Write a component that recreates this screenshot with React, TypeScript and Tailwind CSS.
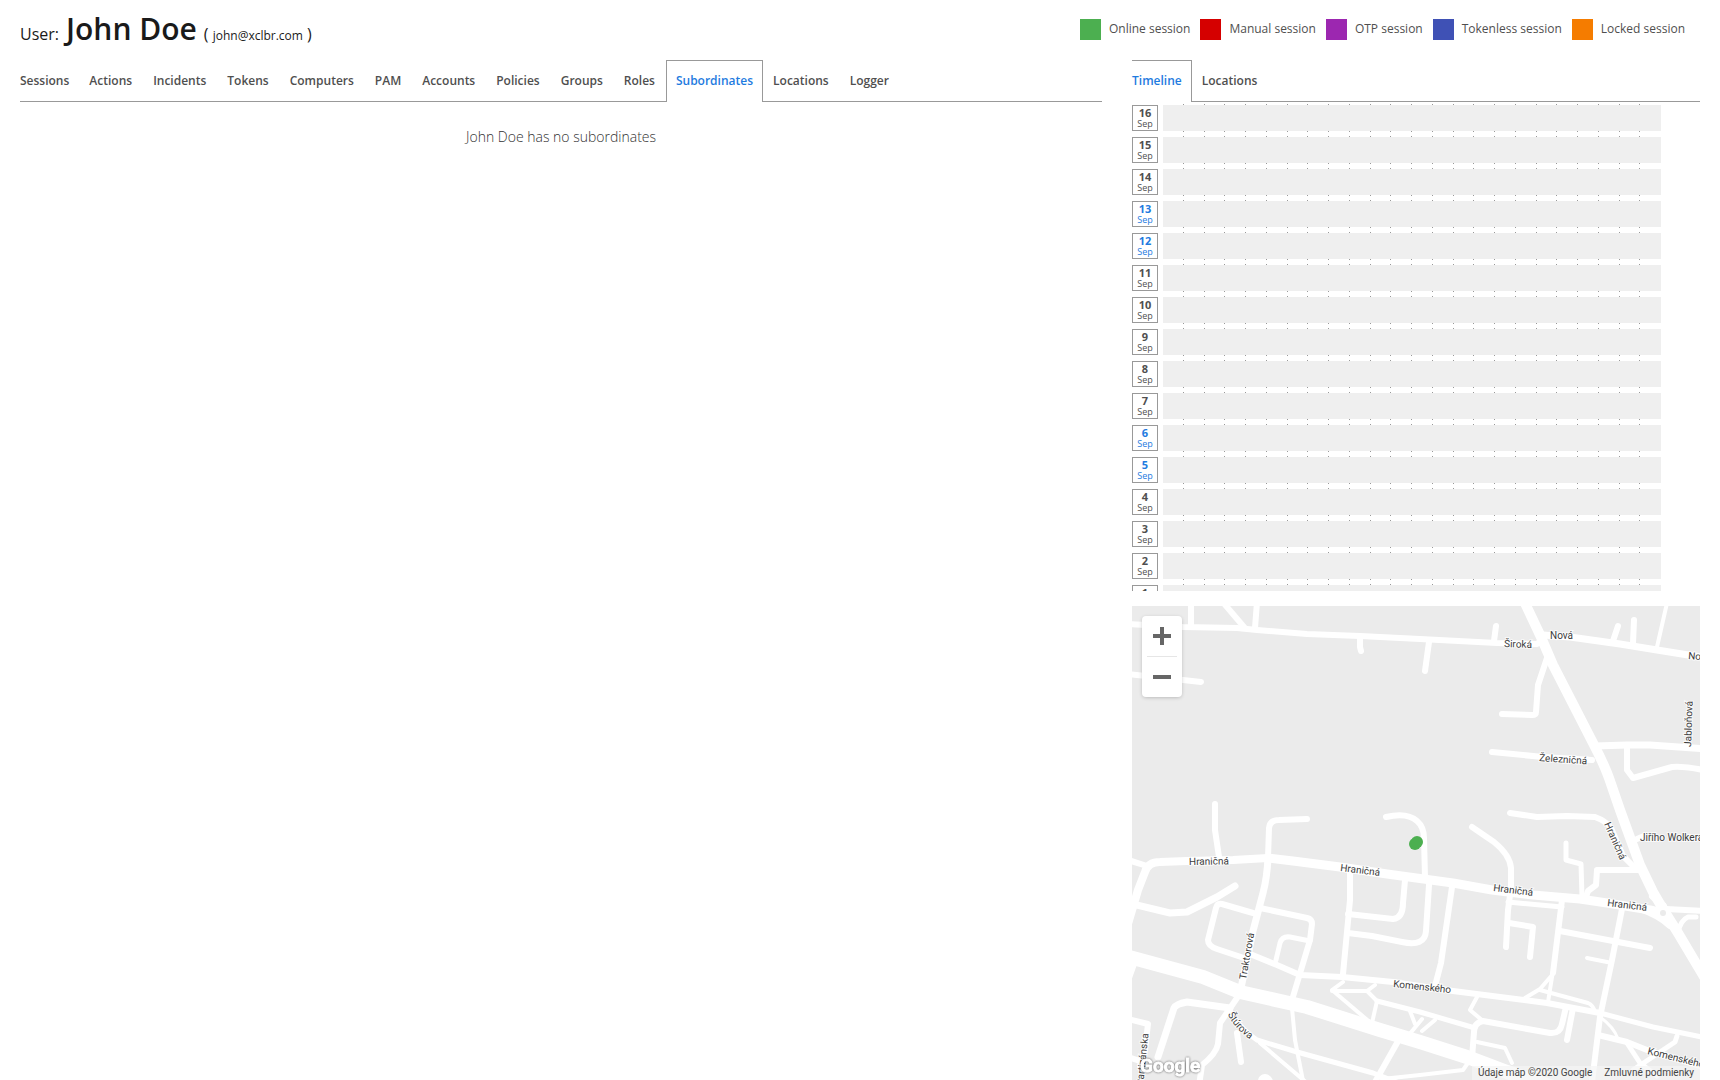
import { useState } from 'react';
import clsx from 'clsx';

const legend = [
  { label: 'Online session', color: 'bg-[#4caf50]' },
  { label: 'Manual session', color: 'bg-[#d50000]' },
  { label: 'OTP session', color: 'bg-[#9c27b0]' },
  { label: 'Tokenless session', color: 'bg-[#3f51b5]' },
  { label: 'Locked session', color: 'bg-[#f57c00]' },
];

const userTabs = [
  'Sessions', 'Actions', 'Incidents', 'Tokens', 'Computers', 'PAM', 'Accounts',
  'Policies', 'Groups', 'Roles', 'Subordinates', 'Locations', 'Logger',
];

const activityTabs = ['Timeline', 'Locations'];

const days = [16, 15, 14, 13, 12, 11, 10, 9, 8, 7, 6, 5, 4, 3, 2, 1];
const weekend = [13, 12, 6, 5];
const hours = Array.from({ length: 24 }, (_, i) => i);

// [stroke width, path]
const roads: [number, string][] = [
  // northern streets
  [6, 'M-4 18L51 21L105 22L125 24L175 28L228 30L288 33L365 37L405 38L412 32'],
  [6, 'M59 -4V20'],
  [6, 'M89 -6L112 21'],
  [6, 'M125 -4L123 22'],
  [6, 'M228 31V41L229 45'],
  [6, 'M-4 68L51 74L69 76'],
  [6, 'M364 20L362 35'],
  [6, 'M297 36L293 65'],
  [7, 'M411 29L438 31L488 38L525 44L575 52'],
  [6, 'M486 20L481 35'],
  [6, 'M502 14L501 37'],
  [4, 'M535 -3L525 41'],
  [6, 'M415 52L406 79L404 106Q404 109 400 109L370 108'],
  [6, 'M360 146L411 151L460 154'],
  [7, 'M463 140L495 139L518 139L575 143'],
  [6, 'M495 141V164L501 172L540 161Q555 160 575 165'],
  [10, 'M392 -5L409 31L421 59L461 137Q472 158 477 172L488 204L508 259L521 286L531 303L546 327L574 374'],
  // Hranicna
  [8, 'M-4 318L6 284L13 266Q16 256 28 256L55 255L101 254L136 252'],
  [9, 'M136 252L161 255L208 261L255 268L321 277L360 284L401 289L448 293L475 297L518 304L531 307'],
  [6, 'M-4 254L15 260'],
  [6, 'M83 198V224L87 251'],
  [6, 'M136 252L137 222Q138 214 147 214L175 213'],
  [7, 'M136 252Q135 272 131 287L121 325L109 382'],
  [6, 'M254 211Q275 206 285 215Q292 221 292 232L293 272'],
  [6, 'M378 207L405 211L435 210L463 211Q474 215 479 222L491 250L504 263'],
  [6, 'M340 221L362 236Q378 249 379 262L379 282L376 304L374 341'],
  [5, 'M434 237V254L449 258L450 291'],
  [6, 'M508 264H465L464 279L456 285L453 294'],
  [6, 'M505 233L512 230'],
  // western blocks
  [7, 'M-4 297L38 307L55 306L85 291L103 280'],
  [6, 'M121 307L90 298Q85 297 84 302L76 334Q76 340 85 343L115 353'],
  [6, 'M128 302L175 312Q180 313 180 318L178 334L163 384L160 394'],
  [4, 'M160 402L163 434L172 480'],
  [6, 'M118 348L145 359L168 369L210 371L261 376L321 385L415 397L468 407'],
  [5, 'M468 407L521 421L575 432'],
  [5, 'M144 354L148 337Q150 330 158 331L178 335'],
  [6, 'M218 267V294L211 368'],
  [6, 'M216 308L261 313Q271 312 271 297L273 274'],
  [6, 'M216 327L240 330L270 336Q293 341 294 325L297 279'],
  [14, 'M-6 350L71 371L108 386L175 401L248 424L288 436L338 452L375 466L421 481'],
  [6, 'M-3 372L2 358'],
  [6, 'M105 392L88 417L86 438Q84 448 70 459L67 480'],
  [7, 'M26 451L42 402Q44 398 55 396L98 402'],
  [5, 'M97 403Q108 423 125 434L165 446L241 467L275 480'],
  [6, 'M105 427L109 456'],
  [4, 'M128 437L175 477'],
  [6, 'M-4 413L16 418L13 444L8 460'],
  [6, 'M-4 451L8 455'],
  [14, 'M133 475L134 476'],
  // eastern blocks
  [5, 'M376 296L430 301'],
  [6, 'M377 317L401 321L398 351'],
  [6, 'M430 294L421 367'],
  [4, 'M421 365L416 396M421 368L408 383L393 392M408 384L456 397Q461 399 463 406'],
  [6, 'M428 325L518 342'],
  [6, 'M490 303L480 354L468 411L460 476'],
  [4, 'M455 352L480 357'],
  [6, 'M320 281L309 357L303 380'],
  [6, 'M441 402L435 434'],
  [3, 'M468 411Q482 421 486 433'],
  [6, 'M466 429L495 436L515 444L575 462'],
  [5, 'M495 437L508 457L525 470M501 464L543 436L545 430'],
  // southern paths
  [4, 'M211 376L200 384L240 418M200 385H235L243 379M235 385L245 395L240 417'],
  [5, 'M245 395L288 406L343 422'],
  [4, 'M278 405L283 418M290 413L276 430M303 414L290 425'],
  [6, 'M265 437L243 476'],
  [4, 'M250 473L288 469L331 464L340 451'],
  [6, 'M434 401L430 418Q428 428 418 427L351 415Q342 417 342 426L340 452'],
  [4, 'M351 415L338 404L345 391'],
  [4, 'M345 436L373 442L380 457'],
  // junction by the ring
  [8, 'M508 302Q528 309 538 319M521 290L531 300'],
  [6, 'M534 303L575 305'],
  [5, 'M546 326Q549 314 556 311L564 311'],
];

// [x, y, rotation, name]
const streets: [number, number, number, string][] = [
  [372, 41, 2, 'Široká'],
  [418, 33, 0, 'Nová'],
  [556, 53, 5, 'Nová'],
  [559, 141, -88, 'Jabloňová'],
  [407, 155, 4, 'Železničná'],
  [57, 259, -1, 'Hraničná'],
  [208, 265, 7, 'Hraničná'],
  [361, 285, 7, 'Hraničná'],
  [475, 300, 7, 'Hraničná'],
  [472, 218, 66, 'Hraničná'],
  [508, 235, 0, 'Jiřího Wolkera'],
  [114, 374, -80, 'Traktorová'],
  [261, 381, 6, 'Komenského'],
  [515, 448, 14, 'Komenského'],
  [11, 480, -84, 'Partizánska'],
];

interface TabsProps {
  tabs: string[];
  initial: string;
}

function Tabs({ tabs, initial }: TabsProps) {
  const [active, setActive] = useState(initial);

  return (
    <div role="tablist" className="flex h-[42px] text-xs font-semibold">
      {tabs.map((tab) => (
        <button
          key={tab}
          role="tab"
          aria-selected={tab === active}
          onClick={() => setActive(tab)}
          className={clsx(
            'cursor-pointer border-[#999] first:border-l-0 first:pl-0',
            tab === active
              ? 'border-x border-t px-[9px] pb-px text-[#1e7be0]'
              : 'border-b px-[10px] pt-px text-[#4f4f4f] not-first:pr-[11px]'
          )}
        >
          {tab}
        </button>
      ))}
      <div className="flex-1 border-b border-[#999]" />
    </div>
  );
}

// Dots that mark the hours between two day bars
function HourTicks({ first }: { first?: boolean }) {
  return (
    <div className={clsx('ml-[31px] flex', first ? 'h-[3px]' : 'h-[6px]')}>
      {hours.map((hour) => (
        <div key={hour} className="flex flex-1 justify-end">
          {hour < 23 && (
            <span className={clsx('w-px border-[#999]', first ? 'border-b' : 'border-y')} />
          )}
        </div>
      ))}
    </div>
  );
}

function Timeline() {
  return (
    <div className="h-[489px] overflow-y-auto pr-[39px] [scrollbar-width:none]">
      <HourTicks first />
      {days.map((day) => (
        <div key={day}>
          <div className="flex h-[26px] gap-[5px]">
            <div
              className={clsx(
                'flex w-[26px] flex-col items-center justify-center border border-[#999]',
                weekend.includes(day) ? 'text-[#1e7be0]' : 'text-[#4f4f4f]'
              )}
            >
              <span className="text-[11px] font-bold leading-[12px]">{day}</span>
              <span className="text-[9px] leading-[10px]">Sep</span>
            </div>
            <div className="flex-1 bg-[#efefef]" />
          </div>
          <HourTicks />
        </div>
      ))}
    </div>
  );
}

function SessionMap() {
  return (
    <div className="relative min-h-[300px] flex-1 overflow-hidden bg-[#ebebeb] font-['Roboto',sans-serif]">
      <svg
        className="absolute inset-0 h-full w-full"
        viewBox="0 0 568 474"
        preserveAspectRatio="xMinYMin slice"
      >
        <g fill="none" stroke="#fff" strokeLinecap="round" strokeLinejoin="round">
          {roads.map(([width, d]) => (
            <path key={d} d={d} strokeWidth={width} />
          ))}
        </g>
        <circle cx="531" cy="307" r="8" fill="#fff" />
        <circle cx="531" cy="307" r="3" fill="#ebebeb" />

        <g fill="#3c3c3c" stroke="#fff" strokeWidth="2" strokeOpacity="0.7" paintOrder="stroke" fontSize="10">
          {streets.map(([x, y, angle, name]) => (
            <text key={`${x}-${y}`} transform={`translate(${x} ${y}) rotate(${angle})`}>
              {name}
            </text>
          ))}
          <path id="sturova" d="M96 408Q102 423 122 436" fill="none" stroke="none" />
          <text>
            <textPath href="#sturova">Štúrova</textPath>
          </text>
        </g>

        <g fill="#4caf50">
          <circle cx="283" cy="238" r="6" />
          <circle cx="285" cy="236" r="6" />
        </g>

        <text
          x="8"
          y="466"
          fontSize="19"
          fontWeight="500"
          fill="#fff"
          stroke="#fff"
          strokeWidth="1"
          className="[filter:drop-shadow(0_0_1px_rgba(0,0,0,0.6))]"
        >
          Google
        </text>
      </svg>

      <div className="absolute left-[10px] top-[10px] flex w-10 flex-col items-center rounded-sm bg-white shadow-[0_1px_4px_-1px_rgba(0,0,0,0.3)]">
        <button aria-label="Zoom in" className="flex h-10 w-10 cursor-pointer items-center justify-center">
          <svg width="18" height="18" viewBox="0 0 18 18" fill="#666">
            <path d="M7 0h4v7h7v4h-7v7H7v-7H0V7h7z" />
          </svg>
        </button>
        <div className="h-px w-[30px] bg-[#e6e6e6]" />
        <button aria-label="Zoom out" className="flex h-10 w-10 cursor-pointer items-center justify-center">
          <svg width="18" height="18" viewBox="0 0 18 18" fill="#666">
            <path d="M0 7h18v4H0z" />
          </svg>
        </button>
      </div>

      <div className="absolute bottom-0 right-0 flex h-[14px] bg-[#f5f5f5]/70 text-[10px] leading-[13px] text-[#444]">
        <span className="px-[6px]">Údaje máp ©2020 Google</span>
        <a href="#terms" className="px-[6px]">Zmluvné podmienky</a>
      </div>
    </div>
  );
}

export default function App() {
  return (
    <div className="flex min-h-screen flex-col bg-white px-5 font-['Open_Sans',sans-serif] text-[#1a1a1a]">
      <header className="flex h-[60px] items-start justify-between pr-[15px]">
        <h1 className="flex items-baseline gap-[7px] pt-2 text-base leading-[42px]">
          <span>User:</span>
          <span className="text-[30px] font-semibold">John Doe</span>
          <span>
            ( <span className="text-xs">john@xclbr.com</span> )
          </span>
        </h1>
        <ul className="flex gap-[10px] pt-[19px] text-xs leading-[19px] text-[#4f4f4f]">
          {legend.map((item) => (
            <li key={item.label} className="flex gap-2">
              <span className={clsx('h-[21px] w-[21px]', item.color)} />
              {item.label}
            </li>
          ))}
        </ul>
      </header>

      <main className="grid flex-1 grid-cols-[minmax(0,1082fr)_minmax(0,568fr)] gap-[30px]">
        <section>
          <Tabs tabs={userTabs} initial="Subordinates" />
          <p className="pt-6 text-center text-sm leading-[22px] font-light text-[#333]">
            John Doe has no subordinates
          </p>
        </section>

        <section className="flex flex-col">
          <Tabs tabs={activityTabs} initial="Timeline" />
          <Timeline />
          <div className="h-[15px]" />
          <SessionMap />
        </section>
      </main>
    </div>
  );
}
